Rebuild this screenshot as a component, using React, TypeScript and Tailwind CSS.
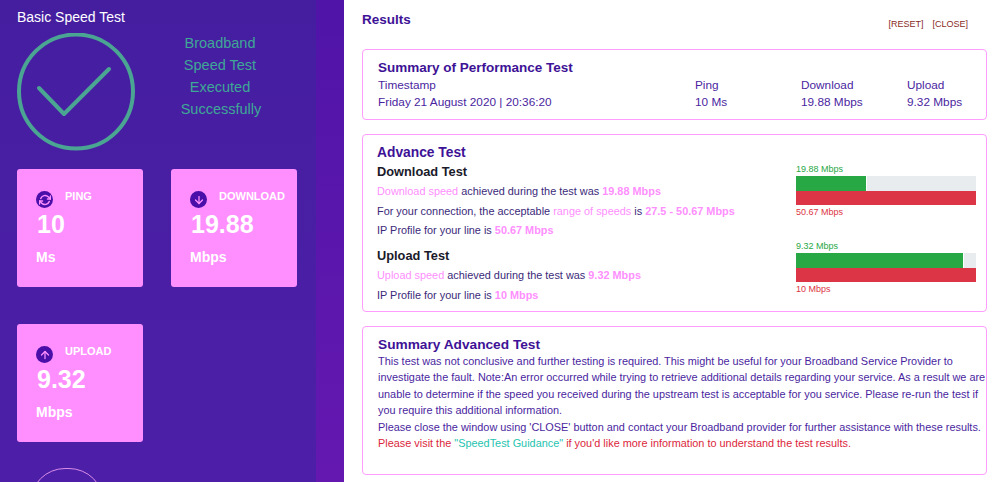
import { FiArrowDown, FiArrowUp, FiRefreshCw } from "react-icons/fi";
import type { ReactNode } from "react";

const Pink = ({ children, bold }: { children: ReactNode; bold?: boolean }) => (
  <span className={bold ? "font-bold text-[#ff8fff]" : "text-[#ff8fff]"}>{children}</span>
);

const StatCard = ({ icon, label, value, unit }: { icon: ReactNode; label: string; value: string; unit: string }) => (
  <div className="w-[126px] h-[118px] rounded-[3px] bg-[#ff8fff] pl-[19px] pt-[19px] text-white font-bold">
    <div className="flex items-start gap-[12px] h-[17px]">
      <span className="mt-[3px] flex w-[17px] h-[17px] shrink-0 items-center justify-center rounded-full bg-[#4a0fa8] text-[#ff8fff]">{icon}</span>
      <span className="text-[11px] leading-[16px] whitespace-nowrap">{label}</span>
    </div>
    <div className="text-[25px] leading-[30px] mt-[4px] ml-[1px]">{value}</div>
    <div className="text-[14px] leading-[16px] mt-[10px]">{unit}</div>
  </div>
);

const Bar = ({ top, bottom, pct }: { top: string; bottom: string; pct: string }) => (
  <div className="w-[180px] text-[9px] leading-[11px]">
    <div className="text-[#28a745]">{top}</div>
    <div className="h-[15px] mt-[1px] bg-[#e9ecef]">
      <div className={`h-full bg-[#28a745] border-r border-white ${pct}`} />
    </div>
    <div className="h-[14px] bg-[#dc3545]" />
    <div className="text-[#dc3545] mt-[2px]">{bottom}</div>
  </div>
);

const App = () => {
  return (
    <div className="flex h-[482px] w-[999px] overflow-hidden bg-white font-['Liberation_Sans',Arial,sans-serif]">
      {/* Left panel */}
      <aside className="w-[316px] shrink-0 bg-gradient-to-b from-[#451ea0] to-[#4d1fa8] pl-[17px] pt-[8px]">
        <h1 className="text-[14px] leading-[18px] text-white">Basic Speed Test</h1>
        <div className="flex mt-[7px] h-[118px]">
          <svg width="118" height="118" viewBox="0 0 118 118" fill="none" stroke="#4ba593" className="shrink-0">
            <circle cx="59" cy="58.500" r="57" strokeWidth="4" />
            <path d="M22 55 L47 81 L92 36" strokeWidth="4" strokeLinecap="round" strokeLinejoin="round" />
          </svg>
          <div className="w-[96px] ml-[37px] -mt-[1px] text-center text-[14.500px] leading-[22px] text-[#3fa796] whitespace-nowrap">
            <div>Broadband</div>
            <div>Speed Test</div>
            <div>Executed</div>
            <div className="ml-[2px]">Successfully</div>
          </div>
        </div>
        <div className="grid grid-cols-[126px_126px] gap-x-[28px] gap-y-[37px] mt-[18px]">
          <StatCard icon={<FiRefreshCw size={12} strokeWidth={3} />} label="PING" value="10" unit="Ms" />
          <StatCard icon={<FiArrowDown size={12} strokeWidth={2.500} />} label="DOWNLOAD" value="19.88" unit="Mbps" />
          <StatCard icon={<FiArrowUp size={12} strokeWidth={2.500} />} label="UPLOAD" value="9.32" unit="Mbps" />
        </div>
        <div className="ml-[13px] mt-[26px] h-[70px] w-[74px] rounded-full border border-[#d98ce8]" />
      </aside>

      {/* Strip between the panels */}
      <div className="w-[28px] shrink-0 bg-gradient-to-b from-[#5014a8] to-[#6418b0]" />

      {/* Results */}
      <main className="w-[642px] pl-[18px] pt-[11px]">
        <div className="flex h-[38px] w-[606px] justify-between">
          <h2 className="text-[13.500px] leading-[17px] font-bold text-[#3e1296]">Results</h2>
          <div className="flex gap-[9px] pt-[8px] text-[9px] leading-[11px] text-[#8a2b1e]">
            <span>[RESET]</span>
            <span>[CLOSE]</span>
          </div>
        </div>

        <section className="h-[71px] w-[625px] rounded-[4px] border border-[#ff9dff] pl-[15px] pt-[9px] text-[11.800px] leading-[17px] text-[#4a1fa0]">
          <h3 className="text-[13.500px] leading-[17px] font-bold text-[#3e1296]">Summary of Performance Test</h3>
          <div className="grid grid-cols-[317px_106px_106px_80px] mt-[1px]">
            <div>Timestamp</div>
            <div>Ping</div>
            <div>Download</div>
            <div>Upload</div>
            <div>Friday 21 August 2020 | 20:36:20</div>
            <div>10 Ms</div>
            <div>19.88 Mbps</div>
            <div>9.32 Mbps</div>
          </div>
        </section>

        <section className="mt-[14px] flex h-[178px] w-[625px] rounded-[4px] border border-[#ff9dff] pl-[14px] pt-[9px]">
          <div className="w-[419px] text-[10.900px] leading-[19px] text-[#3b2a7a]">
            <h3 className="text-[13.800px] leading-[18px] font-bold text-[#3e1296]">Advance Test</h3>
            <h4 className="text-[12.800px] leading-[19px] font-bold text-[#1a1a2a]">Download Test</h4>
            <p className="mt-[1px]"><Pink>Download speed</Pink> achieved during the test was <Pink bold>19.88 Mbps</Pink></p>
            <p className="mt-[1px]">For your connection, the acceptable <Pink>range of speeds</Pink> is <Pink bold>27.5 - 50.67 Mbps</Pink></p>
            <p>IP Profile for your line is <Pink bold>50.67 Mbps</Pink></p>
            <h4 className="mt-[6px] text-[12.800px] leading-[19px] font-bold text-[#1a1a2a]">Upload Test</h4>
            <p className="mt-[1px]"><Pink>Upload speed</Pink> achieved during the test was <Pink bold>9.32 Mbps</Pink></p>
            <p className="mt-[1px]">IP Profile for your line is <Pink bold>10 Mbps</Pink></p>
          </div>
          <div className="flex flex-col gap-[23px] pt-[20px]">
            <Bar top="19.88 Mbps" bottom="50.67 Mbps" pct="w-[39.500%]" />
            <Bar top="9.32 Mbps" bottom="10 Mbps" pct="w-[93.500%]" />
          </div>
        </section>

        <section className="mt-[14px] h-[149px] w-[625px] rounded-[4px] border border-[#ff9dff] pl-[15px] pt-[9px] text-[10.900px] leading-[16.400px] text-[#4a1fa0]">
          <h3 className="text-[13.700px] leading-[17px] font-bold text-[#3e1296]">Summary Advanced Test</h3>
          <p className="whitespace-nowrap">This test was not conclusive and further testing is required. This might be useful for your Broadband Service Provider to<br />investigate the fault. Note:An error occurred while trying to retrieve additional details regarding your service. As a result we are<br />unable to determine if the speed you received during the upstream test is acceptable for you service. Please re-run the test if<br />you require this additional information.</p>
          <p className="whitespace-nowrap">Please close the window using 'CLOSE' button and contact your Broadband provider for further assistance with these results.</p>
          <p className="text-[#dc1f3c]">Please visit the <span className="text-[#1fc4b0]">"SpeedTest Guidance"</span> if you'd like more information to understand the test results.</p>
        </section>
      </main>
    </div>
  );
};

export default App;
